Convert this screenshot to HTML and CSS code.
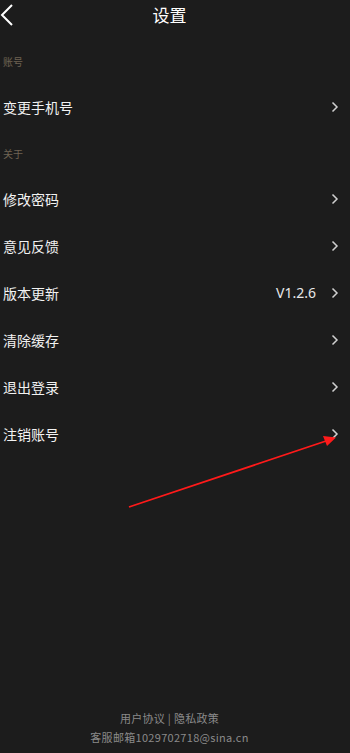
FILE: index.html
```html
<!DOCTYPE html>
<html lang="zh-CN">
<head>
    <meta charset="UTF-8">
    <meta name="viewport" content="width=device-width, initial-scale=1.0">
    <title>设置</title>
    <link rel="stylesheet" href="styles.css">
</head>
<body>
    <div class="page">
        <div class="header">
            <svg class="back" width="14" height="24" viewBox="0 0 14 24">
                <path d="M12 2 L2 12 L12 22" fill="none" stroke="#fff" stroke-width="2"/>
            </svg>
            <div class="title">设置</div>
        </div>

        <div class="group-label">账号</div>
        <div class="row">
            <div class="row-name">变更手机号</div>
            <svg class="chevron" width="8" height="12" viewBox="0 0 8 12"><path d="M1.5 1.5 L6 6 L1.5 10.5" fill="none" stroke="#d0d0d0" stroke-width="1.5"/></svg>
        </div>

        <div class="group-label">关于</div>
        <div class="row">
            <div class="row-name">修改密码</div>
            <svg class="chevron" width="8" height="12" viewBox="0 0 8 12"><path d="M1.5 1.5 L6 6 L1.5 10.5" fill="none" stroke="#d0d0d0" stroke-width="1.5"/></svg>
        </div>
        <div class="row">
            <div class="row-name">意见反馈</div>
            <svg class="chevron" width="8" height="12" viewBox="0 0 8 12"><path d="M1.5 1.5 L6 6 L1.5 10.5" fill="none" stroke="#d0d0d0" stroke-width="1.5"/></svg>
        </div>
        <div class="row">
            <div class="row-name">版本更新</div>
            <div class="row-value">V1.2.6</div>
            <svg class="chevron" width="8" height="12" viewBox="0 0 8 12"><path d="M1.5 1.5 L6 6 L1.5 10.5" fill="none" stroke="#d0d0d0" stroke-width="1.5"/></svg>
        </div>
        <div class="row">
            <div class="row-name">清除缓存</div>
            <svg class="chevron" width="8" height="12" viewBox="0 0 8 12"><path d="M1.5 1.5 L6 6 L1.5 10.5" fill="none" stroke="#d0d0d0" stroke-width="1.5"/></svg>
        </div>
        <div class="row">
            <div class="row-name">退出登录</div>
            <svg class="chevron" width="8" height="12" viewBox="0 0 8 12"><path d="M1.5 1.5 L6 6 L1.5 10.5" fill="none" stroke="#d0d0d0" stroke-width="1.5"/></svg>
        </div>
        <div class="row">
            <div class="row-name">注销账号</div>
            <svg class="chevron" width="8" height="12" viewBox="0 0 8 12"><path d="M1.5 1.5 L6 6 L1.5 10.5" fill="none" stroke="#d0d0d0" stroke-width="1.5"/></svg>
        </div>

        <div class="footer">
            <div>用户协议 | 隐私政策</div>
            <div>客服邮箱1029702718@sina.cn</div>
        </div>

        <!-- annotation arrow drawn over the screenshot -->
        <svg class="mark" width="350" height="753" viewBox="0 0 350 753">
            <line x1="129" y1="507" x2="326" y2="441" stroke="#ff1a1a" stroke-width="1.8"/>
            <path d="M336 437.5 L323 436 L327 446 Z" fill="#ff1a1a"/>
        </svg>
    </div>
</body>
</html>
```

FILE: styles.css
```css
html, body {
    margin: 0;
    padding: 0;
    background: #1c1c1c;
}

body {
    font-family: "Noto Sans CJK SC", "Noto Sans", sans-serif;
    color: #f2f2f2;
}

.page {
    position: relative;
    min-height: 100vh;
    display: flex;
    flex-direction: column;
}

.header {
    position: relative;
    height: 38px;
    padding-right: 11px;
}

.back {
    position: absolute;
    left: 0;
    top: 3px;
}

.title {
    text-align: center;
    font-size: 17px;
    line-height: 30px;
    color: #fff;
}

.group-label {
    height: 45px;
    box-sizing: border-box;
    padding: 16px 0 0 3px;
    font-size: 10px;
    line-height: 16px;
    color: #6f6353;
}

.row {
    height: 47px;
    display: flex;
    align-items: center;
    padding: 0 11px 0 3px;
}

.row-name {
    flex: 1;
    font-size: 14px;
    color: #f2f2f2;
}

.row-value {
    font-family: "Noto Sans", sans-serif;
    font-size: 14px;
    color: #e8e8e8;
    margin-right: 15px;
}

.chevron {
    display: block;
}

.footer {
    margin-top: auto;
    padding: 0 11px 6px 0;
    text-align: center;
    font-size: 11px;
    letter-spacing: 0.3px;
    line-height: 19px;
    color: #8a8a8a;
}

.mark {
    position: absolute;
    left: 0;
    top: 0;
    pointer-events: none;
}
```
